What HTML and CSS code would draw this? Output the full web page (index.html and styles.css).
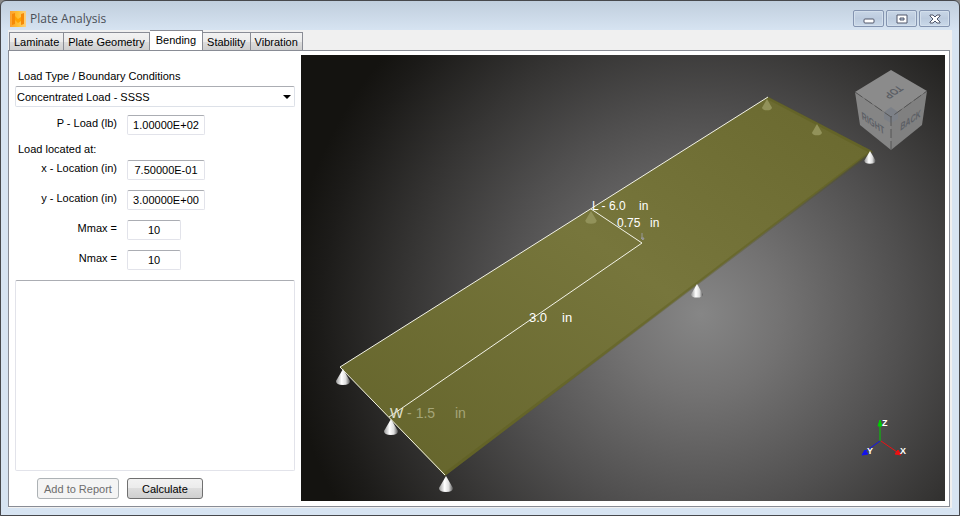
FILE: index.html
```html
<!DOCTYPE html>
<html lang="en">
<head>
    <meta charset="utf-8">
    <meta name="viewport" content="width=device-width, initial-scale=1">
    <title>Plate Analysis</title>
    <link rel="stylesheet" href="styles.css">
</head>

<body>
<div class="window">
    <header class="titlebar">
        <svg class="logo" viewBox="0 0 16 16" aria-hidden="true">
            <defs>
                <linearGradient id="logo-bg" x1="0" y1="0" x2="1" y2="0">
                    <stop offset="0" stop-color="#fba030"/>
                    <stop offset=".5" stop-color="#ffc030"/>
                    <stop offset="1" stop-color="#fcd080"/>
                </linearGradient>
            </defs>
            <path fill="url(#logo-bg)" d="M0 0h16v16H0z"/>
            <path fill="#f58a08" d="M2 3l3-1v11l-3 1zM11 3l3-1v11l-3 1z"/>
            <path fill="#ffa200" d="M5 5l3 3 3-2v4l-3 2-3-3z"/>
        </svg>
        <h1>Plate Analysis</h1>
        <div class="controls">
            <button class="control" aria-label="Minimize">
                <svg viewBox="0 0 14 12"><rect x="2" y="6" width="10" height="4" rx="1"/></svg>
            </button>
            <button class="control" aria-label="Maximize">
                <svg viewBox="0 0 14 12"><path fill-rule="evenodd" d="M2 2h10v8H2zM5 5h4v2H5z"/></svg>
            </button>
            <button class="control" aria-label="Close">
                <svg viewBox="0 0 14 12"><path d="M2 2h3l2 2 2-2h3v1L9 6l3 3v1H9L7 8l-2 2H2V9l3-3-3-3z"/></svg>
            </button>
        </div>
    </header>

    <div class="client">
        <nav class="tabs">
            <button class="tab">Laminate</button>
            <button class="tab">Plate Geometry</button>
            <button class="tab active">Bending</button>
            <button class="tab">Stability</button>
            <button class="tab">Vibration</button>
        </nav>

        <main class="page">
            <form class="form">
                <label class="title" for="load-type">Load Type / Boundary Conditions</label>
                <div class="select">
                    <select id="load-type">
                        <option>Concentrated Load - SSSS</option>
                    </select>
                </div>
                <div class="row first">
                    <label for="p-load">P - Load (lb)</label>
                    <input id="p-load" value="1.00000E+02">
                </div>
                <p class="title">Load located at:</p>
                <div class="row">
                    <label for="x-loc">x - Location (in)</label>
                    <input id="x-loc" value="7.50000E-01">
                </div>
                <div class="row">
                    <label for="y-loc">y - Location (in)</label>
                    <input id="y-loc" value="3.00000E+00">
                </div>
                <div class="row">
                    <label for="mmax">Mmax =</label>
                    <input class="short" id="mmax" value="10">
                </div>
                <div class="row">
                    <label for="nmax">Nmax =</label>
                    <input class="short" id="nmax" value="10">
                </div>
                <textarea class="results" aria-label="Results" readonly></textarea>
                <div class="actions">
                    <button class="btn" type="button" disabled>Add to Report</button>
                    <button class="btn" type="button">Calculate</button>
                </div>
            </form>

            <div class="viewport">
                <svg class="scene" viewBox="0 0 644 446" preserveAspectRatio="xMidYMid slice">
                    <defs>
                        <linearGradient id="steel">
                            <stop offset="0" stop-color="#999"/>
                            <stop offset=".4" stop-color="#fff"/>
                            <stop offset=".7" stop-color="#ddd"/>
                            <stop offset="1" stop-color="#555"/>
                        </linearGradient>
                        <linearGradient id="plate-fill" x1="0" y1="1" x2="1" y2="0">
                            <stop offset="0" stop-color="#63632a"/>
                            <stop offset=".55" stop-color="#77763c"/>
                            <stop offset="1" stop-color="#69682e"/>
                        </linearGradient>
                        <path id="cone" d="M0 0L-7 12Q-7 16 0 16T7 12z"/>
                    </defs>

                    <!-- plate -->
                    <path fill="url(#plate-fill)" d="M39 312L467 42 571 96 144 421z"/>
                    <path class="edge" d="M467 43L570 97 144 419"/>

                    <!-- supports -->
                    <g fill="url(#steel)">
                        <use href="#cone" x="42" y="314"/>
                        <use href="#cone" x="90" y="364"/>
                        <use href="#cone" x="145" y="421"/>
                        <use href="#cone" transform="translate(396 229) scale(.85)"/>
                        <use href="#cone" transform="translate(569 96) scale(.8)"/>
                    </g>
                    <g class="ghost">
                        <use href="#cone" transform="translate(466 44) scale(.7)"/>
                        <use href="#cone" transform="translate(516 69) scale(.7)"/>
                        <use href="#cone" transform="translate(290 156) scale(.8)"/>
                    </g>

                    <!-- dimensions -->
                    <path class="line" d="M467 42L39 312 144 420M290 154L341 188 88 362"/>
                    <path class="arrow" d="M341 178v6M340 183h3l-1 2z"/>
                    <g class="dims">
                        <text x="291" y="155">L - 6.0</text><text x="338" y="155">in</text>
                        <text x="316" y="172">0.75</text><text x="349" y="172">in</text>
                        <text x="228" y="267" class="mid">3.0</text><text x="261" y="267" class="mid">in</text>
                        <text x="89" y="363" class="far"><tspan class="near">W</tspan> - 1.5</text><text x="154" y="363" class="far">in</text>
                    </g>

                    <!-- view cube -->
                    <g class="cube">
                        <path fill="#8b8b8b" d="M590 15L626 36 590 62 554 37z"/>
                        <path fill="#858585" d="M554 37L590 62V95L559 70z"/>
                        <path fill="#808080" d="M626 36L590 62V95L621 70z"/>
                        <path fill="#7c8087" d="M590 52l7 5v7l-7 4-7-4v-7z"/>
                        <path class="seam" d="M554 37L590 62 626 36M590 62v33"/>
                        <text transform="matrix(-.66 .44 -.8 -.58 597 30)">TOP</text>
                        <text transform="matrix(.66 .46 .1 1 561 64)">RIGHT</text>
                        <text transform="matrix(.64 -.45 -.1 1 599 76)">BACK</text>
                    </g>

                    <!-- axes -->
                    <g class="axes">
                        <path stroke="#0c0" fill="#0c0" d="M579 386v-18M579 365l-2 6h4z"/>
                        <path stroke="#e11" fill="#e11" d="M580 386l16 11M600 400l-6-1 3-4z"/>
                        <path stroke="#11e" fill="#11e" d="M579 386l-14 10M561 400l3-5 3 4z"/>
                        <text x="581" y="371">Z</text>
                        <text x="599" y="399">X</text>
                        <text x="566" y="399">Y</text>
                    </g>
                </svg>
            </div>
        </main>
    </div>
</div>
</body>
</html>
```
FILE: styles.css
```css
* {
    box-sizing: border-box;
    margin: 0;
    padding: 0;
}

body {
    background: #888;
    color: #000;
    font: 11px/16px "Liberation Sans", Arial, sans-serif;
}

button, input, select, textarea {
    font: inherit;
    color: inherit;
}

.window {
    display: flex;
    flex-direction: column;
    min-height: 100vh;
    padding: 0 7px 7px;
    border: 1px solid #47484c;
    border-radius: 6px 6px 0 0;
    background: linear-gradient(#c0cedd, #d7e4f2 30px);
}

.titlebar {
    display: flex;
    align-items: center;
    height: 29px;
    padding: 6px 2px 0;
}

.logo {
    width: 16px;
    height: 16px;
}

h1 {
    margin-left: 4px;
    color: #4a4f57;
    font: 12px/16px "Open Sans", "Noto Sans", sans-serif;
}

.controls {
    display: flex;
    gap: 2px;
    margin-left: auto;
}

.control {
    display: flex;
    align-items: center;
    justify-content: center;
    width: 31px;
    height: 17px;
    border: 1px solid #8494b0;
    border-radius: 2px;
    background: linear-gradient(#c8d6e6, #bccbde 50%, #c9d8e9);
    box-shadow: inset 0 0 0 1px #d3dfec;
}

.control svg {
    width: 14px;
    height: 12px;
    fill: #fff;
    stroke: #50566b;
}

.client {
    flex: 1;
    display: flex;
    flex-direction: column;
    padding: 0 2px 1px 0;
    background: #f0f0f0;
}

.tabs {
    display: flex;
    align-items: flex-end;
    height: 20px;
    padding-left: 1px;
}

.tab {
    height: 18px;
    padding: 0 4px;
    border: 1px solid #898c95;
    border-left-width: 0;
    border-bottom: 0;
    background: linear-gradient(#f2f2f2, #ebebeb 50%, #ddd 50%, #cfcfcf);
}

.tab:first-child {
    border-left-width: 1px;
}

.tab.active {
    height: 21px;
    margin-bottom: -1px;
    padding: 0 6px 2px;
    background: #fff;
}

.page {
    flex: 1;
    display: flex;
    gap: 6px;
    padding: 4px 4px 5px;
    border: 1px solid #898c95;
    background: #fff;
}

.form {
    display: flex;
    flex-direction: column;
    flex: 0 0 282px;
    padding: 13px 0 2px 2px;
}

.title {
    padding-left: 3px;
}

.select {
    position: relative;
    margin-top: 2px;
}

.select::after {
    content: "";
    position: absolute;
    right: 4px;
    top: 9px;
    border: 4px solid transparent;
    border-top-color: #000;
    border-bottom: 0;
    pointer-events: none;
}

select {
    display: block;
    width: 100%;
    height: 21px;
    padding: 0 1px;
    border: 1px solid #dde1e8;
    border-top-color: #abadb3;
    border-radius: 2px;
    background: #fff;
    appearance: none;
}

.row {
    display: flex;
    gap: 10px;
    margin-bottom: 10px;
}

.row.first {
    margin: 8px 0 6px;
}

.title + .row {
    margin-top: 3px;
}

.row label {
    width: 102px;
    text-align: right;
}

input {
    width: 78px;
    height: 20px;
    border: 1px solid #e2e3ea;
    border-top-color: #abadb3;
    border-radius: 2px;
    text-align: center;
}

input.short {
    width: 54px;
}

.results {
    flex: 1;
    display: block;
    width: 100%;
    border: 1px solid #e2e3ea;
    border-top-color: #abadb3;
    border-radius: 2px;
    resize: none;
}

.actions {
    display: flex;
    gap: 8px;
    padding: 7px 0 0 22px;
}

.btn {
    min-width: 76px;
    height: 21px;
    padding: 0 6px;
    border: 1px solid #707070;
    border-radius: 3px;
    background: linear-gradient(#f2f2f2, #ebebeb 50%, #ddd 50%, #cfcfcf);
}

.btn:disabled {
    border-color: #adb2b5;
    background: #f4f4f4;
    color: #6d6d6d;
}

.viewport {
    flex: 1;
    display: flex;
    min-width: 0;
    background: radial-gradient(ellipse 64% 90% at 62% 58%, #868686 0, #737272 20%, #504f4f 50%, #353433 72%, #1c1b19 92%, #141310 100%);
}

.scene {
    display: block;
    width: 100%;
    height: 100%;
}

.edge {
    fill: none;
    stroke: #5a5a1c;
    stroke-width: 3;
    opacity: .4;
}

.ghost {
    fill: #92925a;
}

.line {
    fill: none;
    stroke: #f4f4e8;
}

.arrow {
    fill: #777;
    stroke: #999;
}

.dims {
    fill: #fff;
    font-size: 12px;
}

.dims .mid {
    font-size: 13px;
}

.dims .far {
    fill: #a5a578;
    font-size: 14px;
}

.dims .near {
    fill: #e0e0d0;
}

.cube text {
    fill: #5c5f65;
    font-size: 11px;
    font-weight: bold;
}

.seam {
    fill: none;
    stroke: #555;
    stroke-dasharray: 9 3;
}

.axes text {
    fill: #fff;
    stroke: none;
    font-size: 9px;
    font-weight: bold;
}
```
